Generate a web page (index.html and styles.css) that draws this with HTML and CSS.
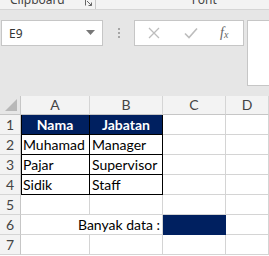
FILE: index.html
```html
<!DOCTYPE html>
<html>
	<head>
		<meta charset="UTF-8">
		<title>Excel</title>
		<link rel="stylesheet" href="styles.css">
	</head>
	<body>
		<div class="ribbon">
			<span class="group-label clip">Clipboard</span>
			<span class="launcher">
				<svg width="8" height="8" viewBox="0 0 8 8"><path d="M0.5 0.5h6M0.5 0.5v6M2 2l4.5 4.5M3.5 6.5h3v-3" fill="none" stroke="#666" stroke-width="1"/></svg>
			</span>
			<span class="group-sep"></span>
			<span class="group-label font">Font</span>
		</div>
		<div class="formula-area">
			<div class="name-box">
				<span>E9</span>
				<svg width="9" height="5" viewBox="0 0 9 5"><path d="M0 0h9L4.5 5z" fill="#777"/></svg>
			</div>
			<div class="dots"><i></i><i></i><i></i></div>
			<div class="fx-box">
				<svg width="12" height="12" viewBox="0 0 12 12"><path d="M1 1l10 10M11 1L1 11" stroke="#bdbdbd" stroke-width="1.3" fill="none"/></svg>
				<svg width="14" height="12" viewBox="0 0 14 12"><path d="M1 6.5l4 4 8-9" stroke="#bdbdbd" stroke-width="1.6" fill="none"/></svg>
				<span class="fx">f<sub>x</sub></span>
			</div>
			<div class="formula-input"></div>
		</div>
		<div class="sheet">
			<div class="hd corner"><span class="tri"></span></div>
			<div class="hd">A</div>
			<div class="hd">B</div>
			<div class="hd">C</div>
			<div class="hd">D</div>

			<div class="rn">1</div>
			<div class="c th first">Nama</div>
			<div class="c th">Jabatan</div>
			<div class="c"></div>
			<div class="c"></div>

			<div class="rn">2</div>
			<div class="c tb first">Muhamad</div>
			<div class="c tb">Manager</div>
			<div class="c"></div>
			<div class="c"></div>

			<div class="rn">3</div>
			<div class="c tb first">Pajar</div>
			<div class="c tb">Supervisor</div>
			<div class="c"></div>
			<div class="c"></div>

			<div class="rn">4</div>
			<div class="c tb first">Sidik</div>
			<div class="c tb">Staff</div>
			<div class="c"></div>
			<div class="c"></div>

			<div class="rn">5</div>
			<div class="c"></div>
			<div class="c"></div>
			<div class="c"></div>
			<div class="c"></div>

			<div class="rn">6</div>
			<div class="c span2 right">Banyak data :</div>
			<div class="c fill"></div>
			<div class="c"></div>

			<div class="rn">7</div>
			<div class="c"></div>
			<div class="c"></div>
			<div class="c"></div>
			<div class="c"></div>
		</div>
	</body>
</html>
```
FILE: styles.css
```css
*{padding: 0;margin: 0;box-sizing: border-box;}
body{background: #fff;font-family: "Noto Sans", sans-serif;overflow: hidden;}

.ribbon{height: 10px;background: #f3f3f3;border-bottom: 1px solid #d5d5d5;display: flex;align-items: flex-end;overflow: hidden;position: relative;}
.group-label{font-size: 12px;color: #444;line-height: 14px;margin-bottom: 2px;}
.clip{margin-left: 10px;}
.launcher{margin-left: 20px;height: 8px;margin-bottom: 0;display: flex;align-items: flex-start;}
.launcher svg{display: block;margin-top: -2px;}
.group-sep{width: 1px;height: 10px;background: #c8c8c8;margin-left: 2px;}
.font{margin-left: 96px;}

.formula-area{height: 86px;background: #e6e6e6;display: flex;align-items: flex-start;padding-top: 10px;}
.name-box{width: 102px;height: 26px;margin-left: 1px;background: #fff;border: 1px solid #c6c6c6;display: flex;align-items: center;justify-content: space-between;padding: 0 7px 0 7px;font-size: 12px;color: #333;}
.name-box svg{margin-top: -2px;}
.dots{width: 31px;height: 26px;display: flex;flex-direction: column;align-items: center;justify-content: center;gap: 2px;}
.dots i{width: 2px;height: 2px;background: #a6a6a6;display: block;}
.fx-box{width: 110px;height: 26px;background: #fff;border: 1px solid #c6c6c6;display: flex;align-items: center;padding-left: 13px;gap: 24px;}
.fx{font-family: "Liberation Serif", serif;font-style: italic;font-size: 14px;color: #666;margin-left: -2px;}
.fx sub{font-size: 10px;vertical-align: -1px;}
.formula-input{flex: 1;height: 66px;margin-left: 3px;background: #fff;border: 1px solid #c6c6c6;border-right: none;}

.sheet{display: grid;grid-template-columns: 21px 69px 73px 63px 1fr;grid-template-rows: 19px repeat(7, 20px);font-family: Lato, "Open Sans", sans-serif;font-size: 14px;background: #fff;}
.hd{background: #f3f3f3;border-right: 1px solid #d5d5d5;border-bottom: 1px solid #c6c6c6;text-align: center;color: #444;line-height: 18px;}
.corner{position: relative;background: #e6e6e6;border-right-color: #c6c6c6;}
.tri{position: absolute;right: 3px;bottom: 3px;width: 0;height: 0;border-left: 12px solid transparent;border-bottom: 12px solid #b8b8b8;}
.rn{background: #f3f3f3;border-right: 1px solid #c6c6c6;border-bottom: 1px solid #d5d5d5;text-align: center;color: #444;line-height: 20px;}
.c{border-right: 1px solid #d4d4d4;border-bottom: 1px solid #d4d4d4;padding: 0 2px;line-height: 20px;color: #000;white-space: nowrap;overflow: visible;}
.th{background: #002060;color: #fff;font-weight: bold;text-align: center;border-right-color: #000;border-bottom-color: #000;}
.tb{border-right-color: #000;border-bottom-color: #000;}
.first{box-shadow: inset 1px 0 #000;}
.span2{grid-column: span 2;}
.right{text-align: right;}
.fill{background: #002060;border-right-color: #002060;border-bottom-color: #002060;}
```
